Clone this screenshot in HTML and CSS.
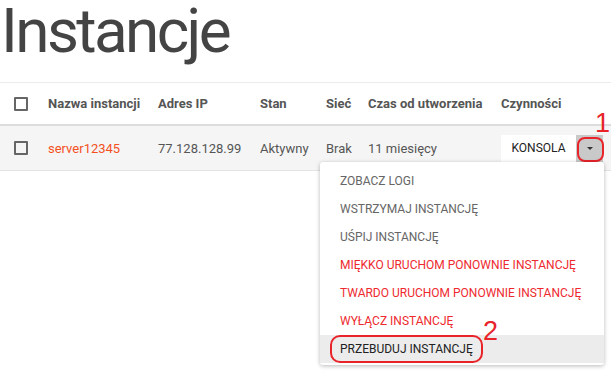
FILE: index.html
```html
<!DOCTYPE html>
<html lang="pl">
<head>
    <meta charset="UTF-8">
    <meta name="viewport" content="width=device-width, initial-scale=1.0">
    <title>Instancje</title>
    <link rel="stylesheet" href="styles.css">
</head>
<body>
    <h1 class="page-title">Instancje</h1>

    <div class="table-wrap">
        <table class="instances">
            <colgroup>
                <col class="col-check">
                <col class="col-name">
                <col class="col-ip">
                <col class="col-state">
                <col class="col-net">
                <col class="col-age">
                <col>
            </colgroup>
            <thead>
                <tr>
                    <th class="cell-check"><span class="checkbox"></span></th>
                    <th>Nazwa instancji</th>
                    <th>Adres IP</th>
                    <th>Stan</th>
                    <th>Sieć</th>
                    <th>Czas od utworzenia</th>
                    <th>Czynności</th>
                </tr>
            </thead>
            <tbody>
                <tr>
                    <td class="cell-check"><span class="checkbox"></span></td>
                    <td><a class="instance-link" href="#">server12345</a></td>
                    <td>77.128.128.99</td>
                    <td>Aktywny</td>
                    <td>Brak</td>
                    <td>11 miesięcy</td>
                    <td>
                        <div class="split-btn">
                            <button class="btn-main">KONSOLA</button>
                            <button class="btn-caret"><span class="caret"></span></button>
                            <span class="mark mark-caret"></span>
                            <span class="mark-num num-1">1</span>
                        </div>
                    </td>
                </tr>
            </tbody>
        </table>

        <!-- dropdown opened from the caret button -->
        <ul class="menu">
            <li>ZOBACZ LOGI</li>
            <li>WSTRZYMAJ INSTANCJĘ</li>
            <li>UŚPIJ INSTANCJĘ</li>
            <li class="danger">MIĘKKO URUCHOM PONOWNIE INSTANCJĘ</li>
            <li class="danger">TWARDO URUCHOM PONOWNIE INSTANCJĘ</li>
            <li class="danger">WYŁĄCZ INSTANCJĘ</li>
            <li class="active">
                <span class="mark-wrap">PRZEBUDUJ INSTANCJĘ<span class="mark-num num-2">2</span></span>
            </li>
        </ul>
    </div>
</body>
</html>
```

FILE: styles.css
```css
html, body {
    min-height: 100vh;
}
body {
    margin: 0;
    font-family: Roboto, "Liberation Sans", Arial, sans-serif;
    background-color: #fff;
    color: #555;
}
.page-title {
    margin: -5px 0 15px 0;
    padding-left: 1px;
    font-size: 62px;
    line-height: 72px;
    font-weight: 400;
    letter-spacing: -2.6px;
    color: #444;
}
.table-wrap {
    position: relative;
}
.instances {
    width: 100%;
    table-layout: fixed;
    border-collapse: collapse;
    border-top: 1px solid #ebebeb;
    font-size: 13px;
}
.col-check { width: 48px; }
.col-name { width: 110px; }
.col-ip { width: 102px; }
.col-state { width: 66px; }
.col-net { width: 42px; }
.col-age { width: 133px; }
th, td {
    padding: 0;
    text-align: left;
    white-space: nowrap;
}
th {
    height: 41px;
    font-weight: 700;
    color: #555;
    border-bottom: 2px solid #ddd;
}
td {
    height: 44px;
    color: #555;
    background-color: #f5f5f5;
    border-bottom: 1px solid #e4e4e4;
}
.cell-check {
    padding-left: 14px;
}
.checkbox {
    display: block;
    width: 10px;
    height: 10px;
    border: 2px solid #666;
    border-radius: 1px;
}
.instance-link {
    color: #f4511e;
    text-decoration: none;
}
.split-btn {
    position: relative;
    display: flex;
    width: 102px;
    height: 27px;
}
.split-btn button {
    border: none;
    margin: 0;
    font-family: inherit;
    cursor: pointer;
}
.btn-main {
    width: 75px;
    background-color: #fff;
    color: #222;
    font-size: 12px;
    padding: 0;
}
.btn-caret {
    width: 27px;
    background-color: #c9c9c9;
    display: flex;
    align-items: center;
    justify-content: center;
    padding: 0;
}
.caret {
    width: 0;
    height: 0;
    border-left: 3px solid transparent;
    border-right: 3px solid transparent;
    border-top: 3px solid #333;
}
.mark {
    position: absolute;
    border: 2px solid #e8232a;
    border-radius: 8px;
    pointer-events: none;
}
.mark-caret {
    left: 76px;
    top: 2px;
    width: 23px;
    height: 21px;
}
.mark-num {
    position: absolute;
    font-family: "Liberation Sans", Arial, sans-serif;
    font-size: 27px;
    line-height: 27px;
    color: #e8232a;
}
.num-1 {
    left: 94px;
    top: -25px;
}
.menu {
    position: absolute;
    left: 320px;
    top: 80px;
    width: 284px;
    margin: 0;
    padding: 5px 0 2px 0;
    list-style: none;
    background-color: #fff;
    border-radius: 3px;
    box-shadow: 0 1px 4px rgba(0, 0, 0, 0.28);
    z-index: 2;
}
.menu li {
    height: 28px;
    line-height: 28px;
    padding-left: 20px;
    font-size: 12px;
    color: #666;
}
.menu li.danger {
    color: #ee2a2f;
}
.menu li.active {
    background-color: #ececec;
    color: #222;
}
.mark-wrap {
    position: relative;
    display: inline-block;
    line-height: 24px;
    padding: 0 8px;
    margin-left: -10px;
    border: 2px solid #e8232a;
    border-radius: 10px;
}
.num-2 {
    left: 151px;
    top: -19px;
}
```
